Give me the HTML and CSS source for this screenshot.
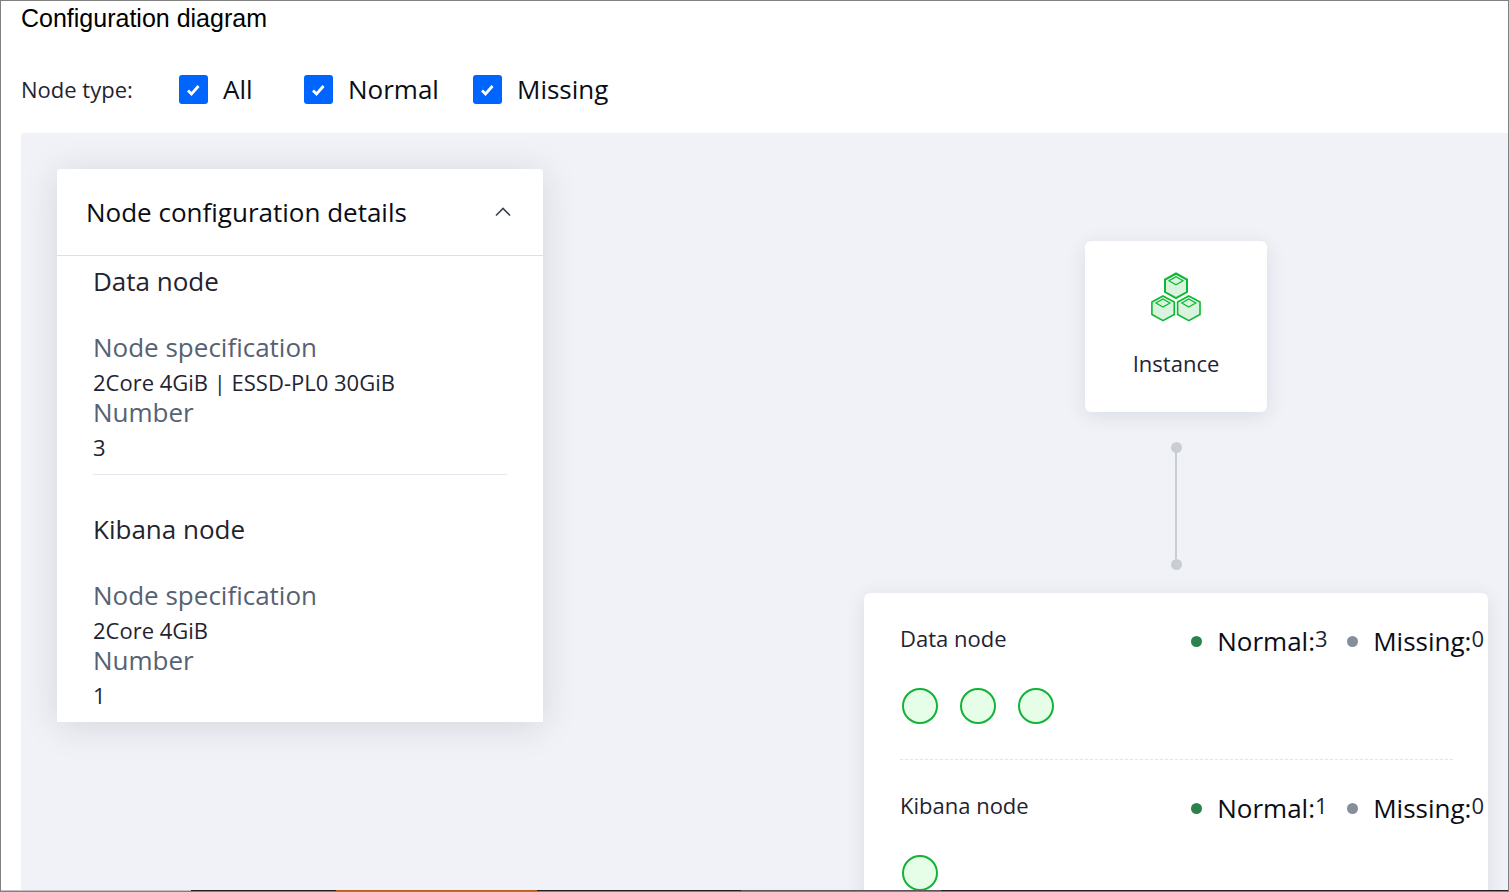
FILE: index.html
```html
<!DOCTYPE html>
<html lang="en">
<head>
<meta charset="utf-8">
<title>Configuration diagram</title>
<link rel="stylesheet" href="styles.css">
</head>
<body>
<div class="frame">
  <main class="page">
    <h1 class="title">Configuration diagram</h1>
    <div class="filters" role="group" aria-labelledby="filter-label">
      <span class="filter-label" id="filter-label">Node type:</span>
      <label class="filter filter-all" for="f-all"><input class="check" type="checkbox" id="f-all" checked>All</label>
      <label class="filter filter-normal" for="f-normal"><input class="check" type="checkbox" id="f-normal" checked>Normal</label>
      <label class="filter" for="f-missing"><input class="check" type="checkbox" id="f-missing" checked>Missing</label>
    </div>
    <div class="canvas">
      <section class="panel">
        <header class="panel-head">
          <h2 class="panel-title">Node configuration details</h2>
          <button class="toggle" type="button" aria-label="Collapse">
            <svg width="16" height="10" viewBox="0 0 16 10" fill="none" stroke="#3f4552" stroke-width="1.7"><path d="M1 8.5 8 1.5 15 8.5"/></svg>
          </button>
        </header>
        <div class="spec">
          <h3 class="spec-title">Data node</h3>
          <dl class="spec-list">
            <dt class="spec-key">Node specification</dt>
            <dd class="spec-value">2Core 4GiB | ESSD-PL0 30GiB</dd>
            <dt class="spec-key">Number</dt>
            <dd class="spec-value">3</dd>
          </dl>
        </div>
        <div class="spec">
          <h3 class="spec-title">Kibana node</h3>
          <dl class="spec-list">
            <dt class="spec-key">Node specification</dt>
            <dd class="spec-value">2Core 4GiB</dd>
            <dt class="spec-key">Number</dt>
            <dd class="spec-value">1</dd>
          </dl>
        </div>
      </section>
      <section class="tree">
        <div class="instance">
          <svg class="cubes" width="52" height="50" viewBox="0 0 52 50" fill="#d9f3df" stroke="#0bb82f" stroke-width="1.6">
            <g stroke-width="2"><path d="M26 1.5 37 7.5V20L26 26.2 15 20V7.5Z"/></g>
            <path d="M26 4.8 33 8.8 26 12.8 19 8.8Z" stroke-width="1.2"/>
            <path d="M13 24 24.3 30V42.5L13 48.7 1.9 42.5V30Z"/>
            <path d="M13 27 20 31 13 35 6 31Z" stroke-width="1.2"/>
            <path d="M38.8 24 50 30V42.5L38.8 48.7 27.6 42.5V30Z"/>
            <path d="M38.8 27 45.8 31 38.8 35 31.8 31Z" stroke-width="1.2"/>
          </svg>
          <span class="instance-name">Instance</span>
        </div>
        <div class="connector"><i class="pin"></i><i class="wire"></i><i class="pin"></i></div>
        <div class="groups">
          <div class="group">
            <div class="group-head">
              <span class="group-name">Data node</span>
              <div class="legend">
                <span class="state state-normal"><i class="dot dot-ok"></i>Normal:<span class="count">3</span></span>
                <span class="state"><i class="dot dot-off"></i>Missing:<span class="count">0</span></span>
              </div>
            </div>
            <div class="nodes"><i class="node"></i><i class="node"></i><i class="node"></i></div>
          </div>
          <svg class="divider" height="1" aria-hidden="true"><line x1="0" y1="0.5" x2="100%" y2="0.5" stroke="#e2e4ea" stroke-dasharray="3 2"/></svg>
          <div class="group">
            <div class="group-head">
              <span class="group-name">Kibana node</span>
              <div class="legend">
                <span class="state state-normal"><i class="dot dot-ok"></i>Normal:<span class="count">1</span></span>
                <span class="state"><i class="dot dot-off"></i>Missing:<span class="count">0</span></span>
              </div>
            </div>
            <div class="nodes"><i class="node"></i></div>
          </div>
        </div>
      </section>
    </div>
  </main>
  <div class="strip"></div>
</div>
</body>
</html>
```

FILE: styles.css
```css
* {
  box-sizing: border-box;
}

body {
  margin: 0;
  background: #fff;
  color: #1f2430;
  font-family: "Open Sans", "Noto Sans", sans-serif;
  font-size: 22px;
}

h1, h2, h3, dl, dd {
  margin: 0;
  font-weight: 400;
}

.frame {
  display: flex;
  flex-direction: column;
  height: 100vh;
  overflow: hidden;
  border: 1px solid #808080;
}

.page {
  display: flex;
  flex: 1;
  flex-direction: column;
  min-height: 0;
  padding-left: 20px;
}

.title {
  color: #000;
  font: 25px/34px "Liberation Sans", Arial, sans-serif;
}

.filters {
  display: flex;
  flex-shrink: 0;
  align-items: center;
  height: 98px;
  padding-top: 10px;
}

.filter-label {
  width: 158px;
}

.filter {
  display: flex;
  align-items: center;
  gap: 15px;
  color: #0a0d16;
  font-size: 26px;
  line-height: 28px;
}

.filter-all {
  width: 125px;
}

.filter-normal {
  width: 169px;
}

.check {
  width: 29px;
  height: 29px;
  margin: 0;
  border-radius: 3px;
  appearance: none;
}

.check:checked {
  background: #0064ff url("data:image/svg+xml,%3Csvg xmlns='http://www.w3.org/2000/svg' viewBox='0 0 29 29'%3E%3Cpath d='M9 15.5 12.5 19 19.5 11' fill='none' stroke='white' stroke-width='2.8'/%3E%3C/svg%3E");
}

.canvas {
  display: flex;
  flex: 1;
  align-items: flex-start;
  justify-content: space-between;
  min-height: 0;
  overflow: hidden;
  padding: 36px 20px 0 36px;
  border-radius: 3px 0 0;
  background: #f0f2f7;
}

.panel {
  width: 486px;
  border-radius: 3px 3px 0 0;
  background: #fff;
  box-shadow: 0 4px 36px rgba(30, 32, 40, 0.13);
}

.panel-head {
  display: flex;
  align-items: center;
  justify-content: space-between;
  height: 87px;
  padding: 0 32px 0 29px;
  border-bottom: 1px solid #dcdfe6;
}

.panel-title {
  color: #0a0d16;
  font-size: 26px;
}

.toggle {
  display: flex;
  padding: 0;
  border: 0;
  background: none;
}

.spec {
  margin: 0 36px;
  padding-bottom: 12px;
}

.spec + .spec {
  padding-top: 29px;
  border-top: 1px solid #e5e8ee;
}

.spec-title {
  padding-bottom: 26px;
  font-size: 26px;
  line-height: 50px;
}

.spec-key {
  color: #566273;
  font-size: 26px;
  line-height: 30px;
}

.spec-value {
  padding-top: 5px;
  line-height: 30px;
}

.tree {
  display: flex;
  flex-direction: column;
  align-items: center;
  width: 624px;
  padding-top: 72px;
}

.instance {
  display: flex;
  flex-direction: column;
  align-items: center;
  gap: 24px;
  width: 182px;
  padding: 31px 0;
  border-radius: 6px;
  background: #fff;
  box-shadow: 0 4px 20px rgba(30, 40, 70, 0.1);
}

.instance-name {
  line-height: 35px;
}

.connector {
  display: flex;
  flex-direction: column;
  align-items: center;
  padding: 30px 0 23px;
}

.pin {
  width: 11px;
  height: 11px;
  border-radius: 50%;
  background: #c9cdd4;
}

.wire {
  width: 2px;
  height: 106px;
  background: #c9cdd4;
}

.groups {
  width: 100%;
  padding: 0 34px 36px 36px;
  border-radius: 6px;
  background: #fff;
  box-shadow: 0 4px 20px rgba(30, 40, 70, 0.1);
}

.group {
  padding: 28px 0 35px;
}

.group-head {
  display: flex;
  align-items: flex-start;
  justify-content: space-between;
  height: 40px;
  margin-right: -30px;
}

.group-name {
  line-height: 34px;
}

.legend {
  display: flex;
}

.state {
  display: flex;
  align-items: center;
  color: #0a0d16;
  font-size: 26px;
  line-height: 40px;
}

.state-normal {
  width: 156px;
}

.count {
  padding-bottom: 6px;
  color: #1f2430;
  font-size: 22px;
  line-height: 34px;
}

.dot {
  width: 11px;
  height: 11px;
  margin-right: 15px;
  border-radius: 50%;
}

.dot-ok {
  background: #2b824c;
}

.dot-off {
  background: #858e9b;
}

.nodes {
  display: flex;
  gap: 22px;
  padding: 27px 2px 0;
}

.node {
  width: 36px;
  height: 36px;
  border: 2px solid #12b336;
  border-radius: 50%;
  background: #e6fee8;
}

.divider {
  display: block;
  width: 100%;
}

.strip {
  height: 1px;
  background: linear-gradient(to right, #c0c0c0 190px, #202020 190px 335px, #b4601e 335px 536px, #202020 536px 740px, #555 740px 940px, #202020 940px);
}
```
